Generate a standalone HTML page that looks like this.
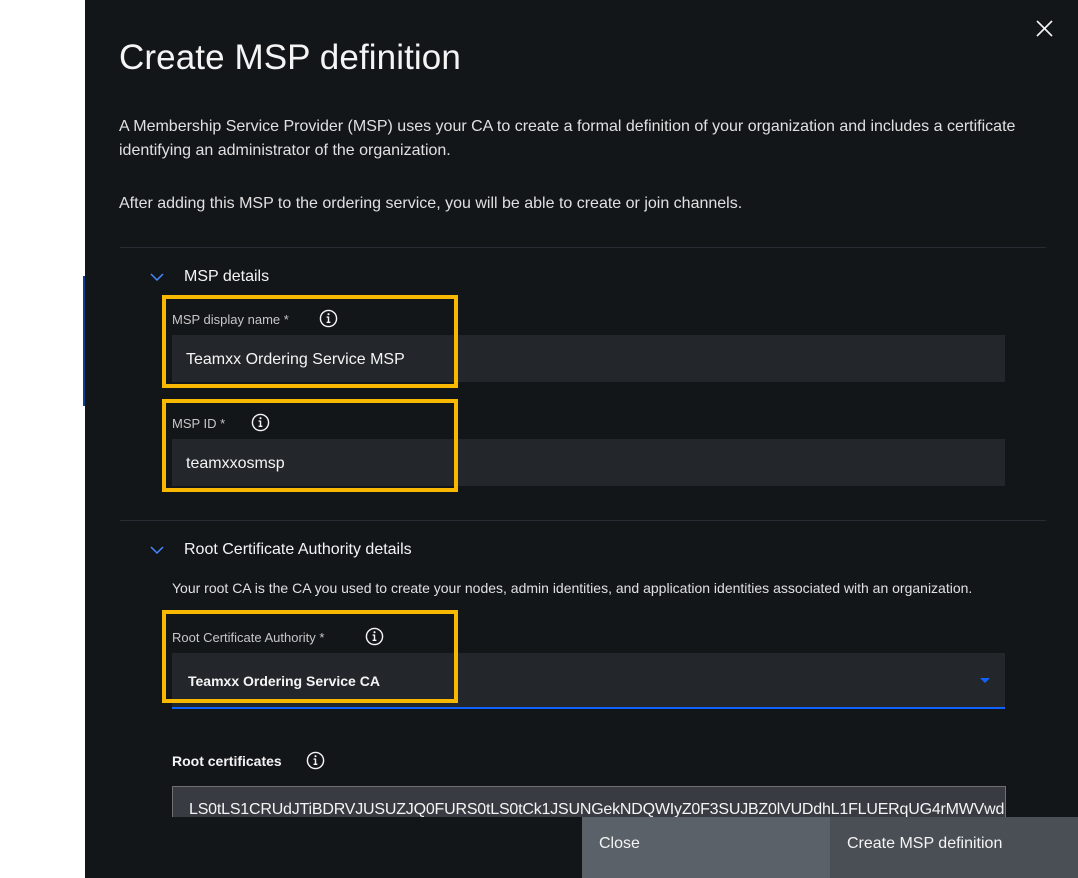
<!DOCTYPE html>
<html><head><meta charset="utf-8"><style>
*{margin:0;padding:0;box-sizing:border-box}
body{width:1078px;height:878px;overflow:hidden;background:#fff;font-family:"Liberation Sans",sans-serif;position:relative}
.dark{position:absolute;left:85px;top:0;width:993px;height:878px;background:#131619}
.a{position:absolute;white-space:nowrap}
.t{color:#f4f4f4}
.lbl{color:#c6c6c6;font-size:13px}
.field{position:absolute;left:172px;width:833px;background:#23272b}
.box{position:absolute;left:162px;width:296px;height:93px;border:4px solid #f9b800}
.info{position:absolute;width:19px;height:19px}
.hr{position:absolute;left:120px;width:926px;height:1px;background:#262c33}
</style></head><body>
<div class="a" style="left:83px;top:276px;width:3px;height:130px;background:#0f3d8c"></div>
<div class="dark"></div>
<svg class="a" style="left:1036px;top:20px" width="17" height="17" viewBox="0 0 17 17"><path d="M1 1L16 16M16 1L1 16" stroke="#f4f4f4" stroke-width="1.6"/></svg>
<div class="a t" style="left:119px;top:38px;font-size:35px;font-weight:300;letter-spacing:0.1px">Create MSP definition</div>
<div class="a t" style="left:119px;top:115px;font-size:16px;line-height:24px;color:#e0e0e0">A Membership Service Provider (MSP) uses your CA to create a formal definition of your organization and includes a certificate<br>identifying an administrator of the organization.</div>
<div class="a t" style="left:119px;top:195px;font-size:16px;color:#e0e0e0">After adding this MSP to the ordering service, you will be able to create or join channels.</div>
<div class="hr" style="top:247px"></div>
<svg class="a" style="left:150px;top:273px" width="14" height="9" viewBox="0 0 14 9"><path d="M1 1L7 7L13 1" stroke="#4589ff" stroke-width="1.5" fill="none"/></svg>
<div class="a t" style="left:184px;top:268px;font-size:16px">MSP details</div>

<div class="field" style="top:335px;height:47px"></div>
<div class="a lbl" style="left:172px;top:312px">MSP display name *</div>
<svg class="info" style="left:319px;top:309px" viewBox="0 0 20 20"><circle cx="10" cy="10" r="8.5" stroke="#f4f4f4" stroke-width="1.5" fill="none"/><path d="M10 8v6M8 14h4M8 8.5h2" stroke="#f4f4f4" stroke-width="1.5"/><circle cx="10" cy="5.5" r="1.1" fill="#f4f4f4"/></svg>
<div class="a t" style="left:186px;top:351px;font-size:16px">Teamxx Ordering Service MSP</div>
<div class="box" style="top:295px"></div>

<div class="field" style="top:439px;height:47px"></div>
<div class="a lbl" style="left:172px;top:416px">MSP ID *</div>
<svg class="info" style="left:251px;top:413px" viewBox="0 0 20 20"><circle cx="10" cy="10" r="8.5" stroke="#f4f4f4" stroke-width="1.5" fill="none"/><path d="M10 8v6M8 14h4M8 8.5h2" stroke="#f4f4f4" stroke-width="1.5"/><circle cx="10" cy="5.5" r="1.1" fill="#f4f4f4"/></svg>
<div class="a t" style="left:186px;top:455px;font-size:16px">teamxxosmsp</div>
<div class="box" style="top:399px"></div>

<div class="hr" style="top:520px"></div>
<svg class="a" style="left:150px;top:546px" width="14" height="9" viewBox="0 0 14 9"><path d="M1 1L7 7L13 1" stroke="#4589ff" stroke-width="1.5" fill="none"/></svg>
<div class="a t" style="left:184px;top:541px;font-size:16px">Root Certificate Authority details</div>
<div class="a" style="left:172px;top:580px;font-size:14px;color:#e0e0e0">Your root CA is the CA you used to create your nodes, admin identities, and application identities associated with an organization.</div>

<div class="field" style="top:653px;height:56px;border-bottom:2px solid #0f62fe"></div>
<div class="a lbl" style="left:172px;top:630px">Root Certificate Authority *</div>
<svg class="info" style="left:365px;top:627px" viewBox="0 0 20 20"><circle cx="10" cy="10" r="8.5" stroke="#f4f4f4" stroke-width="1.5" fill="none"/><path d="M10 8v6M8 14h4M8 8.5h2" stroke="#f4f4f4" stroke-width="1.5"/><circle cx="10" cy="5.5" r="1.1" fill="#f4f4f4"/></svg>
<div class="a t" style="left:188px;top:673px;font-size:14px;font-weight:bold">Teamxx Ordering Service CA</div>
<svg class="a" style="left:980px;top:678px" width="10" height="6" viewBox="0 0 10 6"><path d="M0 0H10L5 5Z" fill="#0f62fe"/></svg>
<div class="box" style="top:610px"></div>

<div class="a t" style="left:172px;top:753px;font-size:14px;font-weight:bold">Root certificates</div>
<svg class="info" style="left:306px;top:751px" viewBox="0 0 20 20"><circle cx="10" cy="10" r="8.5" stroke="#f4f4f4" stroke-width="1.5" fill="none"/><path d="M10 8v6M8 14h4M8 8.5h2" stroke="#f4f4f4" stroke-width="1.5"/><circle cx="10" cy="5.5" r="1.1" fill="#f4f4f4"/></svg>
<div class="a" style="left:172px;top:786px;width:834px;height:31px;background:#383c42;border:1px solid #6f6f6f;border-bottom:none;overflow:hidden">
<div class="a t" style="left:16px;top:14px;font-size:16px;letter-spacing:-0.2px">LS0tLS1CRUdJTiBDRVJUSUZJQ0FURS0tLS0tCk1JSUNGekNDQWIyZ0F3SUJBZ0lVUDdhL1FLUERqUG4rMWVwd</div></div>

<div class="a" style="left:582px;top:817px;width:248px;height:61px;background:#5a6168"><div class="a t" style="left:17px;top:18px;font-size:16px">Close</div></div>
<div class="a" style="left:830px;top:817px;width:248px;height:61px;background:#4a4f56"><div class="a t" style="left:17px;top:18px;font-size:16px">Create MSP definition</div></div>
</body></html>
